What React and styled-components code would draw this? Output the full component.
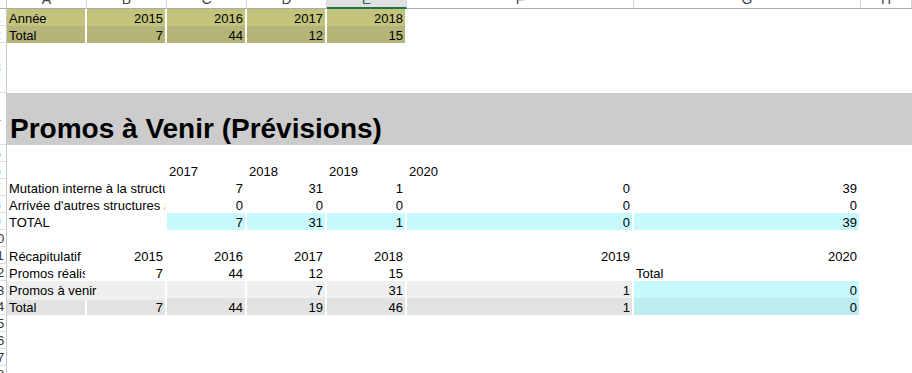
import React from "react";
import styled, { createGlobalStyle } from "styled-components";

const GlobalStyle = createGlobalStyle`
    html, body {
        margin: 0;
        padding: 0;
        background: #fff;
        overflow: hidden;
    }
    body {
        font-family: "Liberation Sans", Arial, sans-serif;
        color: #000;
    }
`;

const COLUMNS = "7px repeat(5, 80px) 227px 227px 1fr";

const OLIVE = "#c3c37e";
const OLIVE_DARK = "#b5b57a";
const CYAN = "#c6f8fc";
const CYAN_DARK = "#bcecf0";
const GRAY = "#efefef";
const GRAY_DARK = "#e2e2e2";

const Sheet = styled.div`
    display: flex;
    flex-direction: column;
    width: 912px;
    height: 373px;
    overflow: hidden;
`;

const HeaderRow = styled.div`
    display: grid;
    grid-template-columns: ${COLUMNS};
    height: 10px;
`;

const Corner = styled.div`
    box-sizing: border-box;
    border-right: 1px solid #c8c8c8;
    border-bottom: 1px solid #ababab;
    background: #fff;
`;

const ColHead = styled.div`
    box-sizing: border-box;
    overflow: hidden;
    text-align: center;
    font-size: 14px;
    line-height: 16px;
    background: ${({ $active }) => ($active ? "#e1e1e1" : "#fff")};
    color: ${({ $active }) => ($active ? "#217346" : "#444")};
    border-right: 1px solid #d5d5d5;
    border-bottom: ${({ $active }) => ($active ? "2px solid #217346" : "1px solid #ababab")};

    span {
        display: block;
        margin-top: -9px;
    }
`;

const Row = styled.div`
    display: grid;
    grid-template-columns: ${COLUMNS};
    height: ${({ $h }) => $h}px;
    flex-shrink: 0;
`;

const RowNum = styled.div`
    box-sizing: border-box;
    overflow: hidden;
    background: #fff;
    border-right: 1px solid #c8c8c8;
    border-bottom: 1px solid #dcdcdc;
    display: flex;
    align-items: center;
    font-size: 13px;
    color: #333;

    span {
        display: block;
        flex-shrink: 0;
        width: 20px;
        margin-left: -13px;
        text-align: center;
    }
`;

const Cell = styled.div`
    grid-column: span ${({ $span }) => $span || 1};
    box-sizing: border-box;
    background: ${({ $fill }) => $fill || "transparent"};
    border-right: 2px solid ${({ $fill }) => ($fill ? "#fff" : "transparent")};
    padding: 0 2px;
    font-size: 13px;
    line-height: 19px;
    white-space: nowrap;
    text-align: ${({ $num }) => ($num ? "right" : "left")};
    overflow: ${({ $spill }) => ($spill ? "visible" : "hidden")};
    position: relative;
    z-index: ${({ $spill }) => ($spill ? 1 : 0)};
`;

const TitleCell = styled.div`
    grid-column: 2 / -1;
    background: #cccccc;
    display: flex;
    align-items: flex-end;
    padding: 0 0 1px 3px;
    font-size: 28px;
    font-weight: bold;
    line-height: 31px;
    white-space: nowrap;
`;

const letters = ["A", "B", "C", "D", "E", "F", "G", "H"];

// numeric cell shorthand
const n = (t, fill) => ({ t, num: true, fill });

const rows = [
    { h: 17, cells: [{ t: "Année", fill: OLIVE }, n("2015", OLIVE), n("2016", OLIVE), n("2017", OLIVE), n("2018", OLIVE)] },
    { h: 17, cells: [{ t: "Total", fill: OLIVE_DARK }, n("7", OLIVE_DARK), n("44", OLIVE_DARK), n("12", OLIVE_DARK), n("15", OLIVE_DARK)] },
    { h: 50, cells: [] },
    { h: 52, title: "Promos à Venir (Prévisions)" },
    { h: 17, cells: [] },
    { h: 17, cells: [{}, {}, { t: "2017" }, { t: "2018" }, { t: "2019" }, { t: "2020" }] },
    { h: 17, cells: [{ t: "Mutation interne à la structure", span: 2 }, n("7"), n("31"), n("1"), n("0"), n("39")] },
    { h: 17, cells: [{ t: "Arrivée d'autres structures administratives", span: 2 }, n("0"), n("0"), n("0"), n("0"), n("0")] },
    { h: 17, cells: [{ t: "TOTAL" }, {}, n("7", CYAN), n("31", CYAN), n("1", CYAN), n("0", CYAN), n("39", CYAN)] },
    { h: 17, cells: [] },
    { h: 17, cells: [{ t: "Récapitulatif" }, n("2015"), n("2016"), n("2017"), n("2018"), n("2019"), n("2020")] },
    { h: 17, cells: [{ t: "Promos réalisées" }, n("7"), n("44"), n("12"), n("15"), {}, { t: "Total" }] },
    { h: 17, cells: [{ t: "Promos à venir", span: 2, spill: true, fill: GRAY }, { fill: GRAY }, n("7", GRAY), n("31", GRAY), n("1", GRAY), n("0", CYAN)] },
    { h: 17, cells: [{ t: "Total", fill: GRAY_DARK }, n("7", GRAY_DARK), n("44", GRAY_DARK), n("19", GRAY_DARK), n("46", GRAY_DARK), n("1", GRAY_DARK), n("0", CYAN_DARK)] },
    { h: 17, cells: [] },
    { h: 17, cells: [] },
    { h: 17, cells: [] },
    { h: 17, cells: [] },
];

const App = () => {
    return (
        <>
            <GlobalStyle />
            <Sheet>
                <HeaderRow>
                    <Corner />
                    {letters.map((l) => (
                        <ColHead key={l} $active={l === "E"}>
                            <span>{l}</span>
                        </ColHead>
                    ))}
                </HeaderRow>
                {rows.map((row, i) => (
                    <Row key={i} $h={row.h}>
                        <RowNum>
                            <span>{i + 1}</span>
                        </RowNum>
                        {row.title ? (
                            <TitleCell>{row.title}</TitleCell>
                        ) : (
                            row.cells.map((c, j) => (
                                <Cell
                                    key={j}
                                    $span={c.span}
                                    $fill={c.fill}
                                    $num={c.num}
                                    $spill={c.spill}
                                >
                                    {c.t}
                                </Cell>
                            ))
                        )}
                    </Row>
                ))}
            </Sheet>
        </>
    );
};

export default App;
